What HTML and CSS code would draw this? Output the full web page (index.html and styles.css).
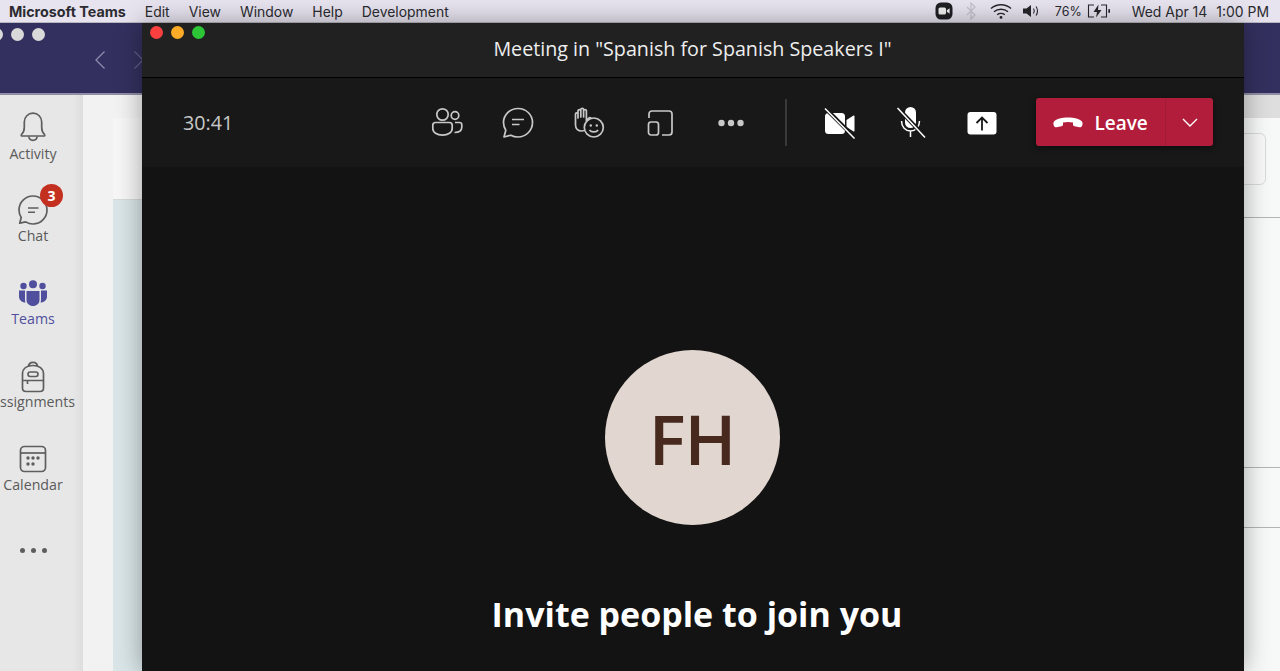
FILE: index.html
```html
<!DOCTYPE html>
<html lang="en">
<head>
<meta charset="utf-8">
<title>Microsoft Teams</title>
<link rel="stylesheet" href="styles.css">
</head>
<body>
<header class="menubar">
  <nav class="menu-left">
    <strong class="app-name">Microsoft Teams</strong>
    <span>Edit</span><span>View</span><span>Window</span><span>Help</span><span>Development</span>
  </nav>
  <div class="menu-right">
    <svg class="st-zoom" width="18" height="18" viewBox="0 0 18 18"><rect x="0.500" y="0.500" width="17" height="17" rx="5.500" fill="#1f1f24"/><rect x="3.500" y="5.500" width="7.500" height="7" rx="1.600" fill="#eee"/><path d="M11.800 8.300l2.800-2v5.400l-2.800-2z" fill="#eee"/></svg>
    <svg class="st-bt" width="12" height="18" viewBox="0 0 12 18"><path d="M2 5l8 8-4 4V1l4 4-8 8" fill="none" stroke="#c4c3cb" stroke-width="1.300"/></svg>
    <svg class="st-wifi" width="22" height="16" viewBox="0 0 22 16"><g fill="none" stroke="#26262a" stroke-width="1.400"><path d="M1 5.500c5.500-5 14.500-5 20 0"/><path d="M4 8.700c3.800-3.300 10.200-3.300 14 0"/><path d="M7.200 11.700c2.100-1.600 5.500-1.600 7.600 0"/></g><circle cx="11" cy="14.400" r="1.400" fill="#26262a"/></svg>
    <svg class="st-vol" width="18" height="14" viewBox="0 0 18 14"><path d="M0 4.500h3.500L8 1v12L3.500 9.500H0z" fill="#26262a"/><g fill="none" stroke="#26262a" stroke-width="1.100"><path d="M10.500 4.500c1 1.500 1 3.500 0 5"/><path d="M13 2.500c2 2.500 2 6.500 0 9"/></g></svg>
    <span class="st-pct">76%</span>
    <svg class="st-bat" width="24" height="14" viewBox="0 0 24 14"><g fill="none" stroke="#26262a" stroke-width="1.100"><path d="M7 1H1.500v12H7"/><path d="M14 1h5.500v12H14"/></g><path d="M11.500 0.500L6.500 8h3.500l-1 5.500L14.500 6H11z" fill="#26262a"/><rect x="21.300" y="5" width="1.700" height="4" rx=".8" fill="#26262a"/></svg>
    <span class="st-clock">Wed Apr 14</span>
    <span class="st-time">1:00 PM</span>
  </div>
</header>

<div class="desktop">
  <section class="teams">
    <div class="teams-title">
      <div class="lights-off"><i></i><i></i><i></i></div>
      <div class="nav-arrows">
        <svg width="12" height="20" viewBox="0 0 12 20"><path d="M10.500 1.500L2 10l8.500 8.500" fill="none" stroke="#8d8bad" stroke-width="1.300"/></svg>
        <svg width="12" height="20" viewBox="0 0 12 20"><path d="M1.500 1.500L10 10l-8.500 8.500" fill="none" stroke="#5f5d87" stroke-width="1.300"/></svg>
      </div>
    </div>
    <div class="teams-body">
      <aside class="rail">
        <div class="rail-item item-activity">
          <svg width="30" height="32" viewBox="0 0 30 32"><g fill="none" stroke="#5e5e5e" stroke-width="1.700" stroke-linejoin="round"><path d="M3.500 23.500c2-2 2.800-4 2.800-7V11c0-5 3.800-8.800 8.700-8.800s8.700 3.800 8.700 8.800v5.500c0 3 .8 5 2.800 7 .6.700.2 1.500-.7 1.500H4.200c-.9 0-1.300-.8-.7-1.500z"/><path d="M10.800 25.500c.3 2.400 2 3.800 4.200 3.800s3.900-1.400 4.200-3.800"/></g></svg>
          <span>Activity</span>
        </div>
        <div class="rail-item item-chat">
          <svg width="32" height="32" viewBox="0 0 32 32"><path d="M16 2C8.300 2 2 8.300 2 16c0 2.800.8 5.300 2.200 7.500L2.700 29.200l6-1.300C10.800 29.200 13.300 30 16 30c7.700 0 14-6.300 14-14S23.700 2 16 2z" fill="none" stroke="#5e5e5e" stroke-width="1.700" stroke-linejoin="round"/><path d="M11 14h10.500M11 18.300h7" stroke="#5e5e5e" stroke-width="1.500" fill="none"/></svg>
          <b class="badge">3</b>
          <span>Chat</span>
        </div>
        <div class="rail-item item-teams">
          <svg width="30" height="26" viewBox="0 0 30 26"><g fill="#4f4f9d"><circle cx="15" cy="4.200" r="4"/><circle cx="5.500" cy="6" r="3.200"/><circle cx="24.500" cy="6" r="3.200"/><path d="M8.500 11h13v9c0 3.500-3 6-6.500 6s-6.500-2.500-6.500-6z"/><path d="M1 10.500h6v9c0 1.200.2 2.200.5 3C3.700 22.500 1 19.800 1 16.500z"/><path d="M29 10.500h-6v9c0 1.200-.2 2.200-.5 3 3.800 0 6.500-2.700 6.500-6z"/></g></svg>
          <span>Teams</span>
        </div>
        <div class="rail-item item-assign">
          <svg width="26" height="32" viewBox="0 0 26 32"><g fill="none" stroke="#5e5e5e" stroke-width="1.700" stroke-linejoin="round"><path d="M2.500 13c0-5.500 4.500-8.500 10.500-8.500S23.500 7.500 23.500 13v14c0 2-1.500 3.500-3.500 3.500H6c-2 0-3.500-1.500-3.500-3.500z"/><path d="M8.500 6c0-3 2-4.700 4.500-4.700S17.500 3 17.500 6"/><rect x="8" y="11" width="10" height="4.500" rx="2.200"/><path d="M2.500 19.500h21M7.500 19.500v3.500"/></g></svg>
          <span>Assignments</span>
        </div>
        <div class="rail-item item-cal">
          <svg width="28" height="28" viewBox="0 0 28 28"><g fill="none" stroke="#5e5e5e" stroke-width="1.700"><rect x="1.500" y="1.500" width="25" height="25" rx="4"/><path d="M1.500 8h25"/></g><g fill="#5e5e5e"><circle cx="9" cy="13" r="1.700"/><circle cx="14" cy="13" r="1.700"/><circle cx="19" cy="13" r="1.700"/><circle cx="9" cy="19" r="1.700"/><circle cx="14" cy="19" r="1.700"/></g></svg>
          <span>Calendar</span>
        </div>
        <div class="rail-more"><i></i><i></i><i></i></div>
      </aside>
      <main class="teams-main">
        <div class="panel">
          <div class="panel-head"></div>
          <div class="panel-tint"></div>
        </div>
        <div class="side">
          <div class="side-band"></div>
          <div class="side-card"></div>
          <div class="side-rule rule-a"></div>
          <div class="side-rule rule-b"></div>
          <div class="side-rule rule-c"></div>
        </div>
      </main>
    </div>
  </section>

  <section class="meeting">
    <div class="meeting-title">
      <div class="lights"><i class="red"></i><i class="amber"></i><i class="green"></i></div>
      <h1>Meeting in "Spanish for Spanish Speakers I"</h1>
    </div>
    <div class="toolbar">
      <span class="timer">30:41</span>
      <div class="tools">
        <svg class="tool" width="32" height="32" viewBox="0 0 32 32"><g fill="none" stroke="#c8c8c8" stroke-width="1.700"><circle cx="11.500" cy="7.500" r="5.700"/><circle cx="24" cy="8.500" r="3.800"/><path d="M4.500 15.500h14c1.500 0 2.700 1.200 2.700 2.700v3c0 4.200-4 7-9.700 7s-9.700-2.800-9.700-7v-3c0-1.500 1.200-2.700 2.700-2.700z"/><path d="M24 15.500h4.500c1.400 0 2.300 1 2.300 2.300V20c0 3.500-3 5.500-7.300 5.500"/></g></svg>
        <svg class="tool" width="32" height="32" viewBox="0 0 32 32"><path d="M16 1.500C7.900 1.500 1.500 7.900 1.500 15.500c0 2.900.9 5.600 2.300 7.700L2 30l6.800-1.800c2.200 1.200 4.600 1.800 7.200 1.800 7.900 0 14.500-6.500 14.500-14.500S23.900 1.500 16 1.500z" fill="none" stroke="#c8c8c8" stroke-width="1.700" stroke-linejoin="round"/><path d="M10 12.500h12M10 17.500h7.500" stroke="#c8c8c8" stroke-width="1.700" fill="none"/></svg>
        <svg class="tool" width="32" height="32" viewBox="0 0 32 32"><path d="M2.500 7c0-1.500 2.500-1.500 2.500 0v4V3.800c0-1.500 2.800-1.500 2.800 0V10V2.500c0-1.500 2.800-1.500 2.800 0V10V3.800c0-1.500 2.800-1.500 2.800 0V14l2.400-3c1.300-1.200 3.200.5 2.200 2l-4.400 7.500c-1.200 2.500-2.800 3.500-5 3.500-3.600 0-6.100-2.500-6.100-6z" fill="none" stroke="#c8c8c8" stroke-width="1.700" stroke-linejoin="round"/><circle cx="20.800" cy="20.500" r="9.500" fill="#181818" stroke="#c8c8c8" stroke-width="1.700"/><path d="M16.500 23c1.800 2.500 6.800 2.500 8.600 0" fill="none" stroke="#c8c8c8" stroke-width="1.700"/><circle cx="17.800" cy="18.500" r="1.200" fill="#c8c8c8"/><circle cx="23.800" cy="18.500" r="1.200" fill="#c8c8c8"/></svg>
        <svg class="tool" width="32" height="32" viewBox="0 0 32 32"><g fill="none" stroke="#c8c8c8" stroke-width="1.700" stroke-linejoin="round"><path d="M5 11V7c0-1.700 1.300-3 3-3h17c1.700 0 3 1.300 3 3v18c0 1.700-1.300 3-3 3h-7"/><rect x="4.500" y="15" width="10" height="13" rx="2.500"/></g></svg>
        <svg class="tool" width="32" height="32" viewBox="0 0 32 32"><g fill="#c8c8c8"><circle cx="6.500" cy="16" r="3.200"/><circle cx="16" cy="16" r="3.200"/><circle cx="25.500" cy="16" r="3.200"/></g></svg>
      </div>
      <div class="divider"></div>
      <div class="tools tools-b">
        <svg class="tool" width="32" height="32" viewBox="0 0 32 32"><rect x="1" y="6" width="20" height="21" rx="3.500" fill="#fff"/><path d="M22.500 13l7-4.500c.5-.3 1 0 1 .5v15c0 .5-.5.8-1 .5l-7-4.500z" fill="#fff"/><path d="M1.500 1.500l30 30" stroke="#181818" stroke-width="4"/><path d="M1 1.500l29.500 30" stroke="#fff" stroke-width="1.500"/></svg>
        <svg class="tool" width="32" height="32" viewBox="0 0 32 32"><rect x="10" y="0" width="11" height="21" rx="5.500" fill="#fff"/><path d="M6.500 14c0 6 4 10 9 10s9-4 9-10M15.500 24v6" fill="none" stroke="#fff" stroke-width="1.500"/><path d="M3 1.500l28 29" stroke="#181818" stroke-width="4"/><path d="M2.500 1l27.500 29.500" stroke="#fff" stroke-width="1.500"/></svg>
        <svg class="tool" width="32" height="32" viewBox="0 0 32 32"><rect x="1.500" y="5" width="29" height="22.500" rx="3" fill="#fff"/><path d="M16 23.500V11M10.500 16l5.500-5.500 5.500 5.500" fill="none" stroke="#181818" stroke-width="1.800"/></svg>
      </div>
      <div class="leave">
        <div class="leave-main">
          <svg width="30" height="12" viewBox="0 0 30 12"><path d="M15 0.500C9 .5 3.500 1.800 1 4.500c-.8 1-.8 3 0 4.500.5 1 1.500 1.500 2.500 1.300l5-1c1-.2 1.500-1 1.500-2V5.500c3-.8 7-.8 10 0v1.800c0 1 .5 1.800 1.500 2l5 1c1 .2 2-.3 2.500-1.300.8-1.500.8-3.500 0-4.500C26.500 1.800 21 .5 15 .5z" fill="#fff"/></svg>
          <span>Leave</span>
        </div>
        <div class="leave-more">
          <svg width="16" height="9" viewBox="0 0 16 9"><path d="M1 1l7 7 7-7" fill="none" stroke="#fff" stroke-width="1.400"/></svg>
        </div>
      </div>
    </div>
    <div class="stage">
      <div class="avatar">FH</div>
      <p class="invite">Invite people to join you</p>
    </div>
  </section>
</div>
</body>
</html>
```

FILE: styles.css
```css
* { box-sizing: border-box; }
html, body { margin: 0; height: 671px; overflow: hidden; }
body { background: #e8e8e8; font-family: "Open Sans", "Liberation Sans", sans-serif; display: flex; flex-direction: column; }

.menubar { height: 23px; flex: none; background: #e7e3ef; border-bottom: 1px solid #b9b7c0; display: flex; justify-content: space-between; align-items: center; padding: 0 11px 0 9px; font-family: "Inter", "Liberation Sans", sans-serif; font-size: 13.950px; color: #2b2b30; }
.menu-left { display: flex; align-items: center; gap: 19px; }
.app-name { font-weight: 700; font-size: 14.300px; }
.menu-right { display: flex; align-items: center; }
.st-zoom { margin-right: 12px; }
.st-bt { margin-right: 13px; }
.st-wifi { margin-right: 11px; }
.st-vol { margin-right: 14px; }
.st-pct { font-size: 12.500px; margin-right: 5px; }
.st-bat { margin-right: 21px; }
.st-clock { margin-right: 9px; }

.desktop { position: relative; flex: 1; min-height: 0; }

.teams { height: 100%; display: flex; flex-direction: column; }
.teams-title { height: 72px; flex: none; background: #33305f; border-bottom: 2px solid #8f8ea6; }
.lights-off { display: flex; gap: 8px; margin-left: -10px; padding-top: 5px; }
.lights-off i { width: 13px; height: 13px; border-radius: 50%; background: #d9d9d9; }
.nav-arrows { display: flex; gap: 27px; padding: 9px 0 0 94px; }
.teams-body { flex: 1; display: flex; min-height: 0; }
.rail { width: 83px; flex: none; background-image: linear-gradient(90deg, #e7e7e7 88%, #dedede); display: flex; flex-direction: column; align-items: flex-start; }
.rail-item { position: relative; display: flex; flex-direction: column; align-items: center; width: 66px; font-size: 14.200px; line-height: 18px; color: #5a5a5a; white-space: nowrap; }
.rail-item span { display: block; }
.item-activity { margin-top: 16px; }
.item-activity span { margin-top: 2px; }
.item-chat { margin-top: 31px; }
.item-chat span { margin-top: 1px; }
.item-teams { margin-top: 35px; color: #4f4f9d; }
.item-teams span { margin-top: 4px; }
.item-assign { margin-top: 33px; }
.item-cal { margin-top: 34px; }
.item-cal span { margin-top: 3px; }
.badge { position: absolute; left: 40px; top: -10px; width: 23px; height: 23px; border-radius: 50%; background: #c4301f; color: #fff; font-size: 14px; font-weight: 700; line-height: 23px; text-align: center; }
.rail-more { display: flex; gap: 6px; margin: 54px 0 0 20px; }
.rail-more i { width: 5px; height: 5px; border-radius: 50%; background: #5e5e5e; }

.teams-main { flex: 1; display: flex; background: #f2f2f2; min-width: 0; padding-left: 30px; }
.panel { width: 1048px; padding-top: 23px; display: flex; flex-direction: column; }
.panel-head { height: 82px; background: #f6f6f6; border-bottom: 1px solid #d4d9dc; }
.panel-tint { flex: 1; background: #d9e5e7; }
.side { flex: 1; position: relative; margin-left: 53px; background: #f7f8f8; }
.side-band { height: 23px; background: #dedede; }
.side-card { position: absolute; left: 12px; top: 38px; width: 40px; height: 52px; border: 1px solid #dadada; border-radius: 6px; background: #f8f8f8; }
.side-rule { position: absolute; left: 0; right: 0; height: 1px; background: #b4b4b4; }
.rule-a { top: 122px; }
.rule-b { top: 372px; }
.rule-c { top: 432px; }

.meeting { position: absolute; left: 142px; top: 0; width: 1102px; bottom: 0; background: #131313; display: flex; flex-direction: column; color: #fff; box-shadow: 0 0 24px rgba(0, 0, 0, .35); }
.meeting-title { height: 55px; flex: none; background: #212121; border-bottom: 1px solid #000; position: relative; display: flex; justify-content: center; align-items: center; padding-bottom: 3px; }
.meeting-title h1 { margin: 0 0 0 -1px; font-size: 19.700px; font-weight: 400; color: #eee; }
.lights { position: absolute; left: 8px; top: 3px; display: flex; gap: 8px; }
.lights i { width: 13px; height: 13px; border-radius: 50%; }
.red { background: #fc4040; }
.amber { background: #fdab26; }
.green { background: #2cc637; }

.toolbar { height: 89px; flex: none; background: #181818; display: flex; align-items: center; padding: 0 31px 0 41px; }
.timer { width: 249px; font-size: 19.700px; color: #c8c8c8; }
.tools { display: flex; gap: 39px; }
.divider { width: 2px; height: 47px; background: #3a3a3a; margin: 0 37px 0 38px; }
.leave { margin-left: 38px; width: 177px; height: 48px; display: flex; background: #b31d3c; border-radius: 3px; box-shadow: 0 2px 6px rgba(0, 0, 0, .5); margin-top: -1px; }
.leave-main { flex: 1; display: flex; align-items: center; padding: 2px 0 0 17px; gap: 11px; font-size: 19px; font-weight: 600; }
.leave-more { width: 48px; display: flex; align-items: center; justify-content: center; border-left: 1px solid #a21a37; }

.stage { flex: 1; display: flex; flex-direction: column; align-items: center; padding-top: 183px; min-height: 0; }
.avatar { width: 175px; height: 175px; margin-left: -2px; border-radius: 50%; background: #e2d6d0; color: #47291e; display: flex; align-items: center; justify-content: center; font-size: 69px; font-weight: 600; letter-spacing: -1px; }
.invite { margin: 66px 0 0 8px; font-size: 34px; line-height: 46px; font-weight: 700; white-space: nowrap; }
```
